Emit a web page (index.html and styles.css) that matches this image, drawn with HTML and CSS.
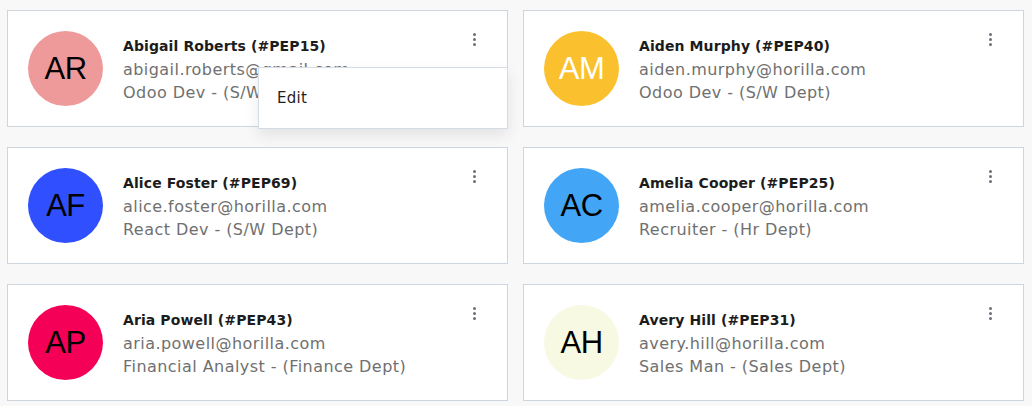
FILE: index.html
```html
<!DOCTYPE html>
<html lang="en">
<head>
<meta charset="utf-8">
<title>Employees</title>
<link rel="stylesheet" href="styles.css">
</head>
<body>
<div class="grid">
  <div class="card">
    <div class="avatar av-ar">AR</div>
    <div class="info">
      <div class="name">Abigail Roberts (#PEP15)</div>
      <div class="line">abigail.roberts@gmail.com</div>
      <div class="line">Odoo Dev - (S/W Dept)</div>
    </div>
    <button class="dots" aria-label="More"><span></span><span></span><span></span></button>
    <div class="dropdown"><div class="dd-item">Edit</div></div>
  </div>
  <div class="card">
    <div class="avatar av-am">AM</div>
    <div class="info">
      <div class="name">Aiden Murphy (#PEP40)</div>
      <div class="line">aiden.murphy@horilla.com</div>
      <div class="line">Odoo Dev - (S/W Dept)</div>
    </div>
    <button class="dots" aria-label="More"><span></span><span></span><span></span></button>
  </div>
  <div class="card">
    <div class="avatar av-af">AF</div>
    <div class="info">
      <div class="name">Alice Foster (#PEP69)</div>
      <div class="line">alice.foster@horilla.com</div>
      <div class="line">React Dev - (S/W Dept)</div>
    </div>
    <button class="dots" aria-label="More"><span></span><span></span><span></span></button>
  </div>
  <div class="card">
    <div class="avatar av-ac">AC</div>
    <div class="info">
      <div class="name">Amelia Cooper (#PEP25)</div>
      <div class="line">amelia.cooper@horilla.com</div>
      <div class="line">Recruiter - (Hr Dept)</div>
    </div>
    <button class="dots" aria-label="More"><span></span><span></span><span></span></button>
  </div>
  <div class="card">
    <div class="avatar av-ap">AP</div>
    <div class="info">
      <div class="name">Aria Powell (#PEP43)</div>
      <div class="line">aria.powell@horilla.com</div>
      <div class="line">Financial Analyst - (Finance Dept)</div>
    </div>
    <button class="dots" aria-label="More"><span></span><span></span><span></span></button>
  </div>
  <div class="card">
    <div class="avatar av-ah">AH</div>
    <div class="info">
      <div class="name">Avery Hill (#PEP31)</div>
      <div class="line">avery.hill@horilla.com</div>
      <div class="line">Sales Man - (Sales Dept)</div>
    </div>
    <button class="dots" aria-label="More"><span></span><span></span><span></span></button>
  </div>
</div>
</body>
</html>
```
FILE: styles.css
```css
html, body {
  margin: 0;
  padding: 0;
  background: #f8f8f8;
}
body {
  padding: 10px 8px 0 7px;
  font-family: "DejaVu Sans", "Open Sans", sans-serif;
}
.grid {
  display: grid;
  grid-template-columns: 1fr 1fr;
  column-gap: 15px;
  row-gap: 20px;
}
.card {
  position: relative;
  display: flex;
  align-items: center;
  height: 117px;
  box-sizing: border-box;
  background: #fff;
  border: 1px solid #cdd5de;
  padding: 0 31px 0 20px;
}
.avatar {
  flex: 0 0 75px;
  width: 75px;
  height: 75px;
  border-radius: 50%;
  display: flex;
  align-items: center;
  justify-content: center;
  font-family: "Liberation Sans", Arial, sans-serif;
  font-size: 31px;
  color: #000;
  letter-spacing: -0.5px;
}
.av-ar { background: #ef9a9a; }
.av-am { background: #fbc02d; color: #fff; }
.av-af { background: #304ffe; }
.av-ac { background: #42a5f5; }
.av-ap { background: #f50057; }
.av-ah { background: #f7f9e3; }
.info {
  margin-left: 20px;
  display: flex;
  flex-direction: column;
  padding-top: 1px;
}
.name {
  font-size: 14px;
  font-weight: bold;
  color: #1c1c1c;
  line-height: 23px;
  letter-spacing: 0.1px;
}
.line {
  font-size: 16px;
  color: #707070;
  line-height: 23px;
  letter-spacing: 0.45px;
}
.dots {
  align-self: flex-start;
  margin: 22px 0 0 auto;
  padding: 0;
  border: 0;
  background: none;
  display: flex;
  flex-direction: column;
  gap: 2px;
  width: 3px;
}
.dots span {
  width: 3px;
  height: 3px;
  border-radius: 50%;
  background: #6b7079;
}
.dropdown {
  position: absolute;
  right: -1px;
  top: 56px;
  width: 250px;
  height: 62px;
  box-sizing: border-box;
  background: #fff;
  border: 1px solid #d6dce3;
  box-shadow: 0 6px 14px rgba(0, 0, 0, 0.09);
  z-index: 2;
  display: flex;
  flex-direction: column;
  justify-content: center;
}
.dd-item {
  padding: 0 18px;
  font-size: 15px;
  color: #1f1f1f;
  letter-spacing: 0.3px;
}
```
